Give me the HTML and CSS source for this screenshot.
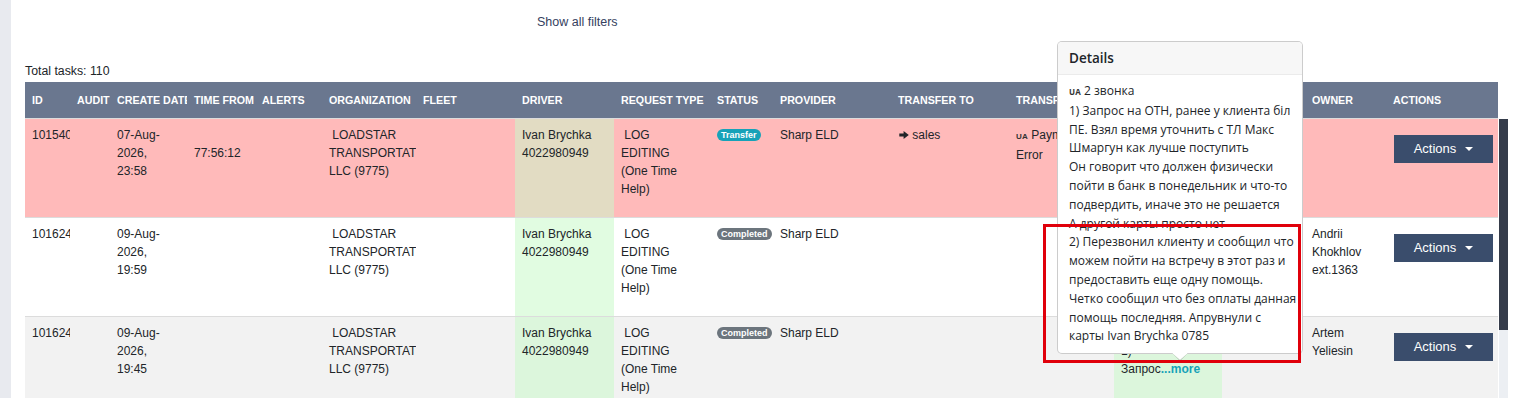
FILE: index.html
```html
<!DOCTYPE html>
<html lang="en">
<head>
<meta charset="utf-8">
<title>Tasks</title>
<link rel="stylesheet" href="styles.css">
</head>
<body>
<div class="page">
  <aside class="sidebar"></aside>
  <main class="main">
    <div class="filters">Show all filters</div>
    <div class="total">Total tasks: 110</div>
    <div class="table-wrap">
      <table class="tasks">
        <colgroup>
          <col style="width:45px"><col style="width:40px"><col style="width:77px"><col style="width:68px">
          <col style="width:67px"><col style="width:94px"><col style="width:99px"><col style="width:99px">
          <col style="width:96px"><col style="width:63px"><col style="width:118px"><col style="width:118px">
          <col style="width:105px"><col style="width:108px"><col style="width:83px"><col style="width:81px">
          <col style="width:112px">
        </colgroup>
        <thead>
          <tr>
            <th>ID</th><th>AUDIT</th><th>CREATE DATE</th><th>TIME FROM</th><th>ALERTS</th>
            <th>ORGANIZATION</th><th>FLEET</th><th>DRIVER</th><th>REQUEST TYPE</th><th>STATUS</th>
            <th>PROVIDER</th><th>TRANSFER TO</th><th>TRANSFER REASON</th><th>COMMENT</th><th>TAGS</th>
            <th>OWNER</th><th>ACTIONS</th>
          </tr>
        </thead>
        <tbody>
          <tr class="row-transfer">
            <td>1015402</td>
            <td></td>
            <td>07-Aug-<br>2026,<br>23:58</td>
            <td><div class="timer">77:56:12</div></td>
            <td></td>
            <td>&nbsp;LOADSTAR TRANSPORTATION LLC (9775)</td>
            <td></td>
            <td class="driver driver-warn">Ivan Brychka 4022980949</td>
            <td>&nbsp;LOG<br>EDITING<br>(One Time<br>Help)</td>
            <td><span class="badge badge-transfer">Transfer</span></td>
            <td>Sharp ELD</td>
            <td><svg class="arrow" viewBox="0 0 10 10" width="10" height="10"><path d="M0.3 3.6H4.6V0.9L9.8 5 4.6 9.1V6.4H0.3Z" fill="#212529"/></svg> sales</td>
            <td><span class="lang">UA</span> Payment Error</td>
            <td class="driver driver-warn"><span class="lang">UA</span> 2 звонка<br>1)<br>Запрос<a class="more">...more</a></td>
            <td></td>
            <td></td>
            <td><button class="actions">Actions <span class="caret"></span></button></td>
          </tr>
          <tr>
            <td>1016245</td>
            <td></td>
            <td>09-Aug-<br>2026,<br>19:59</td>
            <td></td>
            <td></td>
            <td>&nbsp;LOADSTAR TRANSPORTATION LLC (9775)</td>
            <td></td>
            <td class="driver driver-ok">Ivan Brychka 4022980949</td>
            <td>&nbsp;LOG<br>EDITING<br>(One Time<br>Help)</td>
            <td><span class="badge badge-done">Completed</span></td>
            <td>Sharp ELD</td>
            <td></td>
            <td></td>
            <td class="driver driver-ok"><span class="lang">UA</span> 2 звонка<br>1)<br>Запрос<a class="more">...more</a></td>
            <td></td>
            <td>Andrii Khokhlov ext.1363</td>
            <td><button class="actions">Actions <span class="caret"></span></button></td>
          </tr>
          <tr class="row-alt">
            <td>1016243</td>
            <td></td>
            <td>09-Aug-<br>2026,<br>19:45</td>
            <td></td>
            <td></td>
            <td>&nbsp;LOADSTAR TRANSPORTATION LLC (9775)</td>
            <td></td>
            <td class="driver driver-ok-alt">Ivan Brychka 4022980949</td>
            <td>&nbsp;LOG<br>EDITING<br>(One Time<br>Help)</td>
            <td><span class="badge badge-done">Completed</span></td>
            <td>Sharp ELD</td>
            <td></td>
            <td></td>
            <td class="driver driver-ok-alt comment"><span class="lang">UA</span> 2 звонка<br>1)<br>Запрос<a class="more">...more</a></td>
            <td></td>
            <td>Artem Yeliesin</td>
            <td><button class="actions">Actions <span class="caret"></span></button></td>
          </tr>
        </tbody>
      </table>
      <div class="scrollbar"><div class="thumb"></div></div>
    </div>
  </main>

  <div class="popover">
    <div class="popover-header">Details</div>
    <div class="popover-body">
      <span class="lang">UA</span> 2 звонка<br>
      1) Запрос на ОТН, ранее у клиента біл<br>
      ПЕ. Взял время уточнить с ТЛ Макс<br>
      Шмаргун как лучше поступить<br>
      Он говорит что должен физически<br>
      пойти в банк в понедельник и что-то<br>
      подвердить, иначе это не решается<br>
      А другой карты просто нет<br>
      2) Перезвонил клиенту и сообщил что<br>
      можем пойти на встречу в этот раз и<br>
      предоставить еще одну помощь.<br>
      Четко сообщил что без оплаты данная<br>
      помощь последняя. Апрувнули с<br>
      карты Ivan Brychka 0785
    </div>
  </div>
  <div class="highlight"></div>
</div>
</body>
</html>
```

FILE: styles.css
```css
* { box-sizing: border-box; }
html { overflow: hidden; }
body {
  margin: 0;
  font-family: "Liberation Sans", Arial, sans-serif;
  font-size: 12px;
  color: #212529;
  background: #fff;
}
.page {
  display: flex;
  position: relative;
  min-height: 398px;
}
.sidebar {
  flex: none;
  width: 11px;
  background: #e8eaef;
}
.main {
  flex: 1;
  padding: 13px 0 0 14px;
}
.filters {
  margin-left: 512px;
  line-height: 18px;
  font-size: 12.5px;
  color: #354160;
}
.total {
  margin-top: 31px;
  margin-bottom: 2px;
  line-height: 18px;
  font-size: 12.3px;
}
.table-wrap {
  display: flex;
  align-items: flex-start;
}
.tasks {
  flex: none;
  width: 1473px;
  table-layout: fixed;
  border-collapse: collapse;
}
.tasks th {
  height: 36px;
  padding: 0 7px;
  background: #6a778f;
  color: #fff;
  font-size: 10.7px;
  font-weight: bold;
  text-align: left;
  white-space: nowrap;
  overflow: hidden;
}
.tasks tbody tr { height: 99px; }
.tasks td {
  padding: 7px;
  vertical-align: top;
  line-height: 18px;
  border-top: 1px solid #dcdcdc;
  overflow: hidden;
}
.row-transfer td { background: #ffbaba; }
.row-alt td { background: #f2f2f2; }
.tasks td.driver-warn { background: #e2dcc3; }
.tasks td.driver-ok { background: #e1fce1; }
.tasks td.driver-ok-alt { background: #dcf6dc; }
.tasks td.comment { padding-top: 5px; }
.timer { margin-top: 18px; }
.badge {
  display: inline-block;
  padding: 1px 4px;
  border-radius: 10px;
  font-size: 9px;
  line-height: 10px;
  font-weight: bold;
  color: #fff;
  vertical-align: 1px;
}
.badge-transfer { background: #17a2b8; }
.badge-done { background: #6c757d; }
.arrow { vertical-align: -1px; margin-left: 1px; }
.lang {
  font-size: 8px;
  font-weight: bold;
  letter-spacing: 0.2px;
  color: #333;
}
.more {
  color: #17a2b8;
  font-weight: bold;
}
.actions {
  display: flex;
  align-items: center;
  justify-content: center;
  gap: 9px;
  width: 99px;
  height: 28px;
  margin: 9px 0 0 1px;
  padding: 0;
  border: 0;
  background: #3a4d6c;
  color: #fff;
  font-family: "Liberation Sans", Arial, sans-serif;
  font-size: 13px;
}
.caret {
  width: 0;
  height: 0;
  border-top: 4px solid #fff;
  border-left: 4px solid transparent;
  border-right: 4px solid transparent;
}
.scrollbar {
  flex: none;
  width: 9px;
  height: 300px;
  margin: 37px 0 0 1px;
  background: #eceff3;
}
.thumb {
  height: 211px;
  background: #353c4a;
}
.popover {
  position: absolute;
  left: 1057px;
  top: 41px;
  width: 246px;
  background: #fff;
  border: 1px solid rgba(0, 0, 0, 0.2);
  border-radius: 5px;
  font-family: "Open Sans", "Noto Sans", sans-serif;
  color: #212529;
}
.popover::before,
.popover::after {
  content: "";
  position: absolute;
  left: 50%;
  width: 0;
  height: 0;
  border-left: 8px solid transparent;
  border-right: 8px solid transparent;
}
.popover::before {
  bottom: -8px;
  margin-left: -8px;
  border-top: 8px solid rgba(0, 0, 0, 0.25);
}
.popover::after {
  bottom: -7px;
  margin-left: -8px;
  border-top: 7px solid #fff;
}
.popover-header {
  padding: 7px 11px;
  line-height: 18px;
  font-size: 13.5px;
  font-weight: 600;
  background: #f7f7f7;
  border-bottom: 1px solid #ebebeb;
  border-radius: 4px 4px 0 0;
}
.popover-body {
  padding: 7px 11px;
  font-size: 12px;
  line-height: 18.8px;
  white-space: nowrap;
}
.highlight {
  position: absolute;
  left: 1043px;
  top: 224px;
  width: 258px;
  height: 139px;
  border: 3px solid #e0000b;
}
```
